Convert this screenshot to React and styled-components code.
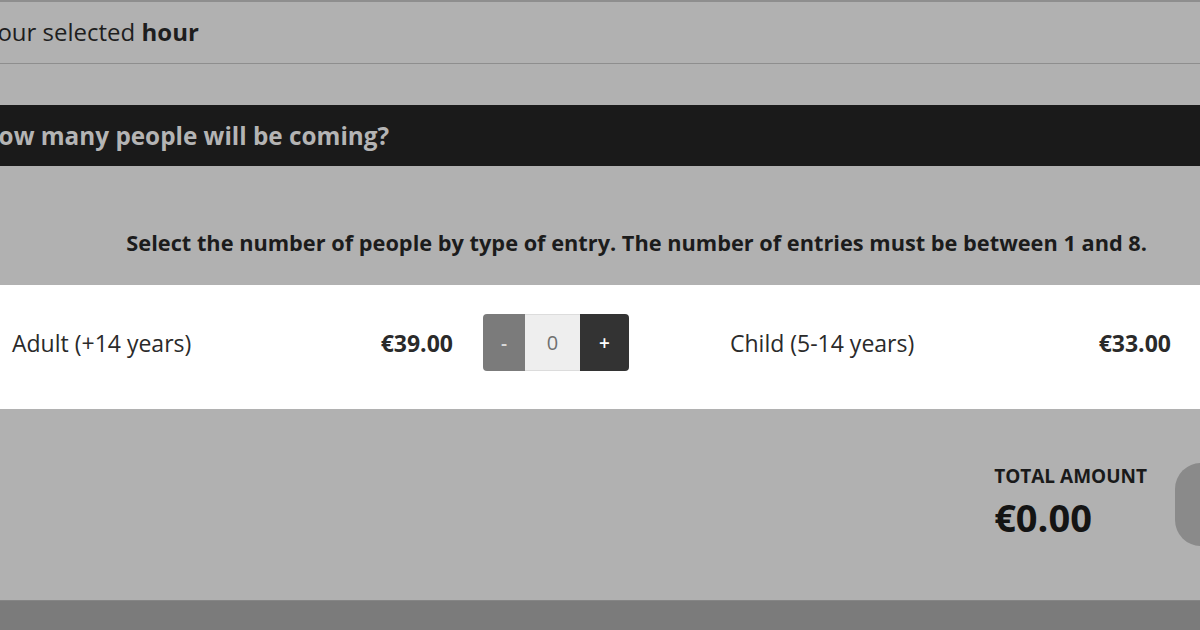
import React from "react";
import styled, { createGlobalStyle } from "styled-components";

const Global = createGlobalStyle`
  html, body { margin: 0; padding: 0; }
  body {
    width: 1200px; height: 630px; overflow: hidden;
    background: #b1b1b1;
    font-family: "Open Sans", "Noto Sans", sans-serif;
    color: #1c1c1c;
  }
`;

const Page = styled.div`
  width: 1200px;
  height: 630px;
  display: flex;
  flex-direction: column;
  overflow: hidden;
  background: #b1b1b1;
`;

const HourBar = styled.div`
  height: 64px;
  box-sizing: border-box;
  border-top: 2px solid #8e8e8e;
  border-bottom: 1px solid #8e8e8e;
  display: flex;
  align-items: center;
  padding-bottom: 3px;
`;

const HourText = styled.div`
  font-size: 24px;
  margin-left: -16px;
  white-space: nowrap;
  color: #1e1e1e;
  b { font-weight: 700; }
`;

const Heading = styled.h2`
  margin: 41px 0 0;
  height: 61px;
  background: #1a1a1a;
  color: #b4b4b4;
  font-size: 24.3px;
  font-weight: 700;
  display: flex;
  align-items: center;
  white-space: nowrap;
  text-indent: -20px;
`;

const Instructions = styled.p`
  margin: 0;
  height: 119px;
  box-sizing: border-box;
  padding: 62px 53px 0 0;
  text-align: right;
  font-size: 21.75px;
  line-height: 30px;
  font-weight: 700;
  white-space: nowrap;
  color: #1c1c1c;
`;

const TicketBand = styled.div`
  background: #ffffff;
  height: 124px;
  box-sizing: border-box;
  padding-bottom: 9px;
  display: grid;
  grid-template-columns: 600px 600px;
  align-items: center;
`;

const Ticket = styled.div`
  display: flex;
  align-items: center;
  padding-left: ${(p) => p.$left}px;
`;

const TicketName = styled.span`
  flex: 0 0 ${(p) => p.$w}px;
  font-size: 23px;
  color: #2a2a2a;
  white-space: nowrap;
`;

const Price = styled.span`
  flex: 0 0 ${(p) => p.$w}px;
  font-size: 23px;
  font-weight: 700;
  color: #2a2a2a;
  text-align: right;
  white-space: nowrap;
`;

const Stepper = styled.div`
  flex: 0 0 auto;
  display: flex;
  margin-left: 30px;
  height: 57px;
  border-radius: 4px;
  overflow: hidden;
`;

const StepBtn = styled.button`
  width: ${(p) => p.$w}px;
  border: 0;
  padding: 0;
  background: ${(p) => p.$bg};
  color: ${(p) => p.$fg};
  font-family: inherit;
  font-size: 19px;
  font-weight: 600;
`;

const StepValue = styled.div`
  width: 55px;
  background: #eeeeee;
  border-top: 1px solid #dcdcdc;
  border-bottom: 1px solid #dcdcdc;
  box-sizing: border-box;
  display: flex;
  align-items: center;
  justify-content: center;
  color: #707070;
  font-size: 20px;
`;

const Footer = styled.div`
  flex: 1;
  display: flex;
  justify-content: flex-end;
  align-items: flex-start;
  padding-top: 55px;
`;

const Total = styled.div`
  display: flex;
  flex-direction: column;
  margin-right: 28px;
`;

const TotalLabel = styled.div`
  font-size: 19px;
  font-weight: 700;
  color: #1a1a1a;
  line-height: 24px;
`;

const TotalValue = styled.div`
  font-size: 38px;
  font-weight: 700;
  color: #141414;
  line-height: 50px;
  margin-top: 4px;
`;

const PayButton = styled.div`
  flex: 0 0 60px;
  height: 83px;
  margin: -1px -35px 0 0;
  background: #8a8a8a;
  border-radius: 26px;
`;

const BottomBar = styled.div`
  height: 29px;
  background: #7b7b7b;
  border-top: 1px solid #858585;
`;

export default function App() {
  return (
    <>
      <Global />
      <Page>
        <HourBar>
          <HourText>
            Your selected <b>hour</b>
          </HourText>
        </HourBar>
        <Heading>How many people will be coming?</Heading>
        <Instructions>
          Select the number of people by type of entry. The number of entries must be between 1 and 8.
        </Instructions>
        <TicketBand>
          <Ticket $left={12}>
            <TicketName $w={290}>Adult (+14 years)</TicketName>
            <Price $w={151}>€39.00</Price>
            <Stepper>
              <StepBtn $w={42} $bg="#7b7b7b" $fg="#d8d8d8">-</StepBtn>
              <StepValue>0</StepValue>
              <StepBtn $w={49} $bg="#333333" $fg="#ffffff">+</StepBtn>
            </Stepper>
          </Ticket>
          <Ticket $left={130}>
            <TicketName $w={290}>Child (5-14 years)</TicketName>
            <Price $w={151}>€33.00</Price>
          </Ticket>
        </TicketBand>
        <Footer>
          <Total>
            <TotalLabel>TOTAL AMOUNT</TotalLabel>
            <TotalValue>€0.00</TotalValue>
          </Total>
          <PayButton />
        </Footer>
        <BottomBar />
      </Page>
    </>
  );
}
